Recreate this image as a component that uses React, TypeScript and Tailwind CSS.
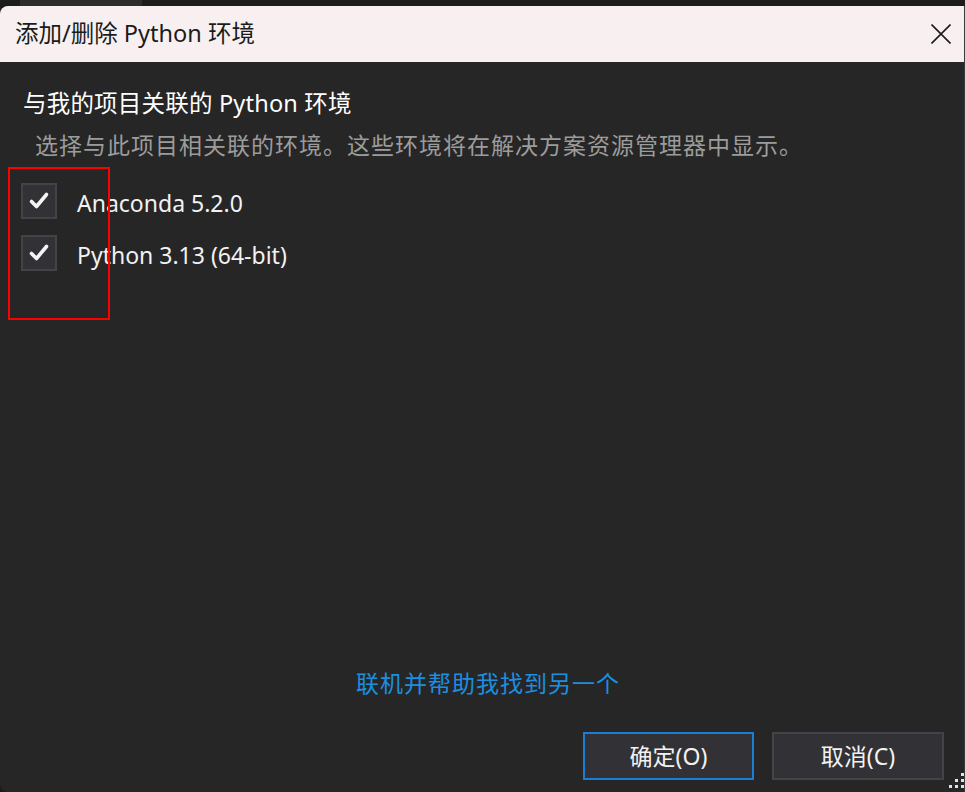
const FONT = 'font-["Noto_Sans","Noto_Sans_CJK_SC",sans-serif]'

const ENVS = ['Anaconda 5.2.0', 'Python 3.13 (64-bit)']

function CheckBox() {
  return (
    <div className="w-[36px] h-[36px] shrink-0 bg-[#323236] border-2 border-[#424247] flex items-center justify-center">
      <svg width="36" height="36" viewBox="0 0 36 36" className="-m-[2px]">
        <path d="M10.5 18.5 L15.5 23.5 L25.5 11.5" fill="none" stroke="#f4f4f4" strokeWidth="3.6" strokeLinecap="round" strokeLinejoin="round" />
      </svg>
    </div>
  )
}

export default function App() {
  return (
    <div className={`${FONT} w-[965px] h-[792px] bg-[#1c1c1c] flex flex-col overflow-hidden relative`}>
      {/* strip behind the dialog */}
      <div className="h-[6px] shrink-0 flex">
        <div className="ml-[20px] w-[122px] bg-[#2c2c2c]" />
      </div>

      <div className="flex-1 flex flex-col rounded-tl-[8px] rounded-bl-[8px] overflow-hidden bg-[#262626] border-r border-[#3a3a3a]">
        {/* title bar */}
        <div className="h-[56px] shrink-0 bg-[#f8f0f0] flex items-center justify-between pl-[15px] pr-[12px]">
          <span className="text-[23.5px] text-[#1b1b1b] leading-none">添加/删除 Python 环境</span>
          <button className="w-[20px] h-[20px] mr-[1px]">
            <svg width="20" height="20" viewBox="0 0 20 20">
              <path d="M0.5 0.5 L19.5 19.5 M19.5 0.5 L0.5 19.5" stroke="#1b1b1b" strokeWidth="1.6" />
            </svg>
          </button>
        </div>

        {/* body */}
        <div className="flex-1 flex flex-col px-[23px] pt-[26px] pb-[12px]">
          <p className="text-[23.5px] leading-[30px] text-white tracking-[0.2px]">与我的项目关联的 Python 环境</p>
          <p className="mt-[12px] ml-[12px] text-[23px] leading-[30px] text-[#9c9c9c] tracking-[1px] whitespace-nowrap">
            选择与此项目相关联的环境。这些环境将在解决方案资源管理器中显示。
          </p>

          <div className="mt-[23px] ml-[-2px] flex flex-col gap-[16px]">
            {ENVS.map(name => (
              <div key={name} className="flex items-center gap-[20px]">
                <CheckBox />
                <span className="text-[23px] leading-[30px] text-[#f2f2f2] mt-[3px]">{name}</span>
              </div>
            ))}
          </div>

          <div className="flex-1" />

          <div className="flex justify-center pl-[12px]">
            <a className="text-[23px] leading-[30px] text-[#1b8fe0] tracking-[1px] cursor-pointer">联机并帮助我找到另一个</a>
          </div>

          <div className="mt-[34px] flex justify-end gap-[18px] -mr-[3px]">
            <button className="w-[171px] h-[48px] bg-[#323236] border-2 border-[#1a7ed2] text-[23px] text-[#f2f2f2]">确定(O)</button>
            <button className="w-[172px] h-[48px] bg-[#323236] border-2 border-[#444448] text-[23px] text-[#f2f2f2]">取消(C)</button>
          </div>
        </div>
      </div>

      {/* annotation box */}
      <div className="absolute left-[8px] top-[167px] w-[102px] h-[153px] border-2 border-[#ff0000]" />

      {/* resize grip */}
      <svg className="absolute right-0 bottom-[1px]" width="17" height="18" viewBox="0 0 17 18">
        <rect x="13" y="0" width="3" height="3" fill="#dfe3ee" />
        <rect x="7" y="6" width="3" height="3" fill="#dfe3ee" />
        <rect x="13" y="6" width="3" height="3" fill="#dfe3ee" />
        <rect x="1" y="12" width="3" height="3" fill="#dfe3ee" />
        <rect x="7" y="12" width="3" height="3" fill="#dfe3ee" />
        <rect x="13" y="12" width="3" height="3" fill="#dfe3ee" />
      </svg>
    </div>
  )
}
